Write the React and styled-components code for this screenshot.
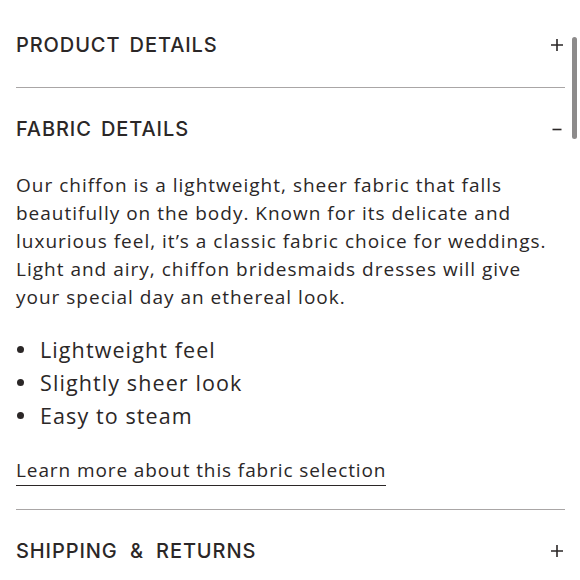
import React from "react";
import styled, { createGlobalStyle } from "styled-components";

const Global = createGlobalStyle`
  html, body { margin: 0; padding: 0; background: #fff; }
  body { width: 580px; height: 580px; overflow: hidden; }
`;

const Page = styled.div`
  position: relative;
  width: 580px;
  height: 580px;
  overflow: hidden;
  box-sizing: border-box;
  padding: 0 15px 0 16px;
  color: #2b2727;
`;

const Section = styled.section`
  border-bottom: ${(p) => (p.$last ? "none" : "1.5px solid #a9a6a6")};
`;

const Header = styled.div`
  display: flex;
  align-items: center;
  justify-content: space-between;
  padding: ${(p) => (p.$first ? "33px" : "29px")} 0 30px 0;
`;

const Title = styled.h2`
  margin: 0;
  font-family: Inter, "Liberation Sans", sans-serif;
  font-weight: 500;
  font-size: 20px;
  line-height: 24px;
  letter-spacing: 0.9px;
  word-spacing: 3px;
  color: #2b2727;
`;

const Amp = styled.span`
  margin: 0 3px;
`;

const Toggle = styled.svg`
  width: 14px;
  height: 14px;
  margin-right: 1px;
  flex: none;
`;

const Body = styled.div`
  padding-bottom: 24px;
  font-family: "Open Sans", "Liberation Sans", sans-serif;
  color: #2b2727;
`;

const Paragraph = styled.p`
  margin: 0;
  font-size: 19px;
  line-height: 28px;
  letter-spacing: 1px;
`;

const List = styled.ul`
  margin: 22px 0 0 0;
  padding: 0;
  list-style: none;
`;

const Item = styled.li`
  display: flex;
  align-items: center;
  font-size: 21.5px;
  line-height: 33px;
  letter-spacing: 1.1px;
  &::before {
    content: "";
    width: 7px;
    height: 7px;
    border-radius: 50%;
    background: #2b2727;
    margin: 0 16px 0 1px;
    flex: none;
  }
`;

const LinkLine = styled.div`
  margin-top: 24px;
  line-height: 28px;
`;

const Link = styled.a`
  font-size: 19px;
  letter-spacing: 0.9px;
  color: #2b2727;
  text-decoration: none;
  border-bottom: 1.5px solid #2b2727;
  padding-bottom: 2px;
`;

const Scrollbar = styled.div`
  position: absolute;
  right: 3px;
  top: 37px;
  width: 5px;
  height: 102px;
  border-radius: 3px;
  background: #8d8b8b;
`;

const Plus = () => (
  <Toggle viewBox="0 0 14 14">
    <path d="M7 1v12M1 7h12" stroke="#2b2727" strokeWidth="1.6" fill="none" />
  </Toggle>
);

const Minus = () => (
  <Toggle viewBox="0 0 14 14">
    <path d="M2.5 7.5h9" stroke="#2b2727" strokeWidth="1.6" fill="none" />
  </Toggle>
);

export default function App() {
  return (
    <Page>
      <Global />
      <Section>
        <Header $first>
          <Title>PRODUCT DETAILS</Title>
          <Plus />
        </Header>
      </Section>
      <Section>
        <Header>
          <Title>FABRIC DETAILS</Title>
          <Minus />
        </Header>
        <Body>
          <Paragraph>
            Our chiffon is a lightweight, sheer fabric that falls beautifully on
            the body. Known for its delicate and luxurious feel, it’s a classic
            fabric choice for weddings. Light and airy, chiffon bridesmaids
            dresses will give your special day an ethereal look.
          </Paragraph>
          <List>
            <Item>Lightweight feel</Item>
            <Item>Slightly sheer look</Item>
            <Item>Easy to steam</Item>
          </List>
          <LinkLine>
            <Link href="#">Learn more about this fabric selection</Link>
          </LinkLine>
        </Body>
      </Section>
      <Section $last>
        <Header>
          <Title>
            SHIPPING <Amp>&amp;</Amp> RETURNS
          </Title>
          <Plus />
        </Header>
      </Section>
      <Scrollbar />
    </Page>
  );
}
